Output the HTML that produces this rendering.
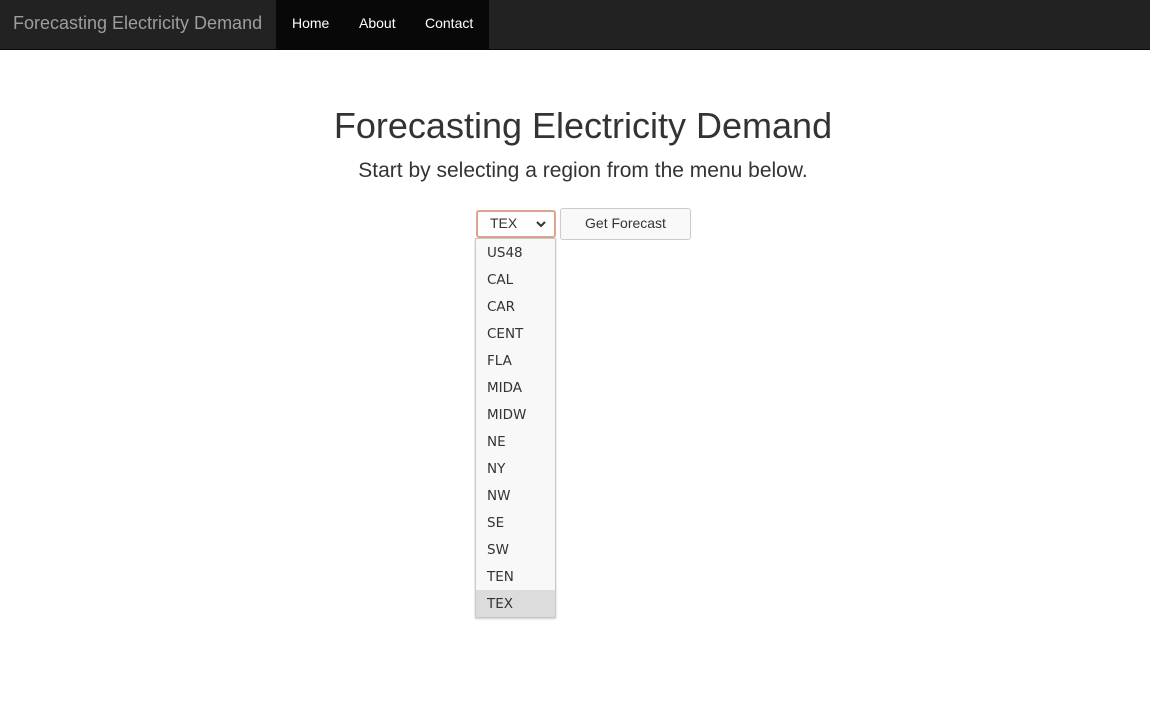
<!DOCTYPE html>
<html><head><meta charset="utf-8"><style>
body{margin:0;width:1150px;height:707px;background:#fff;font-family:"Liberation Sans",sans-serif;color:#333;position:relative;overflow:hidden}
.nav{position:absolute;left:0;top:0;width:1150px;height:49px;background:#222;border-bottom:1px solid #080808}
.brand{position:absolute;left:13px;top:13px;font-size:18px;color:#9d9d9d}
.links{position:absolute;left:276px;top:0;width:213px;height:49px;background:#080808}
.links span{position:absolute;top:15px;font-size:14px;color:#fff}
h1{position:absolute;left:0;width:1166px;text-align:center;top:105px;margin:0;font-size:36px;font-weight:normal}
.sub{position:absolute;left:0;width:1166px;text-align:center;top:159px;font-size:21px}
.sel{position:absolute;left:476px;top:210px;width:76px;height:24px;border:2px solid #e0a48c;border-radius:3px;background:#fff}
.sel span{position:absolute;left:12px;top:3px;font-size:14px;color:#333}
.btn{position:absolute;left:560px;top:208px;width:129px;height:30px;border:1px solid #ccc;border-radius:3px;background:#f9f9f9;font-size:14px;text-align:center;line-height:29px;color:#333}
.list{position:absolute;left:475px;top:238px;width:79px;height:378px;border:1px solid #c8c8c8;background:#f8f8f8;box-shadow:0 1px 2px rgba(0,0,0,.2)}
.list div{height:27px;line-height:29px;padding-left:11px;font-size:13.5px;font-family:"DejaVu Sans","Liberation Sans",sans-serif;color:#333;box-sizing:border-box}
.list .on{background:#dcdcdc}
</style></head><body>
<div class="nav"><div class="brand">Forecasting Electricity Demand</div>
<div class="links"><span style="left:16px">Home</span><span style="left:83px">About</span><span style="left:149px">Contact</span></div></div>
<h1>Forecasting Electricity Demand</h1>
<div class="sub">Start by selecting a region from the menu below.</div>
<div class="sel"><span>TEX</span><svg style="position:absolute;left:58px;top:9px" width="10" height="7" viewBox="0 0 10 7"><path d="M1 1L5 5L9 1" fill="none" stroke="#333" stroke-width="2"/></svg></div>
<div class="btn">Get Forecast</div>
<div class="list"><div>US48</div><div>CAL</div><div>CAR</div><div>CENT</div><div>FLA</div><div>MIDA</div><div>MIDW</div><div>NE</div><div>NY</div><div>NW</div><div>SE</div><div>SW</div><div>TEN</div><div class="on">TEX</div></div>
</body></html>
